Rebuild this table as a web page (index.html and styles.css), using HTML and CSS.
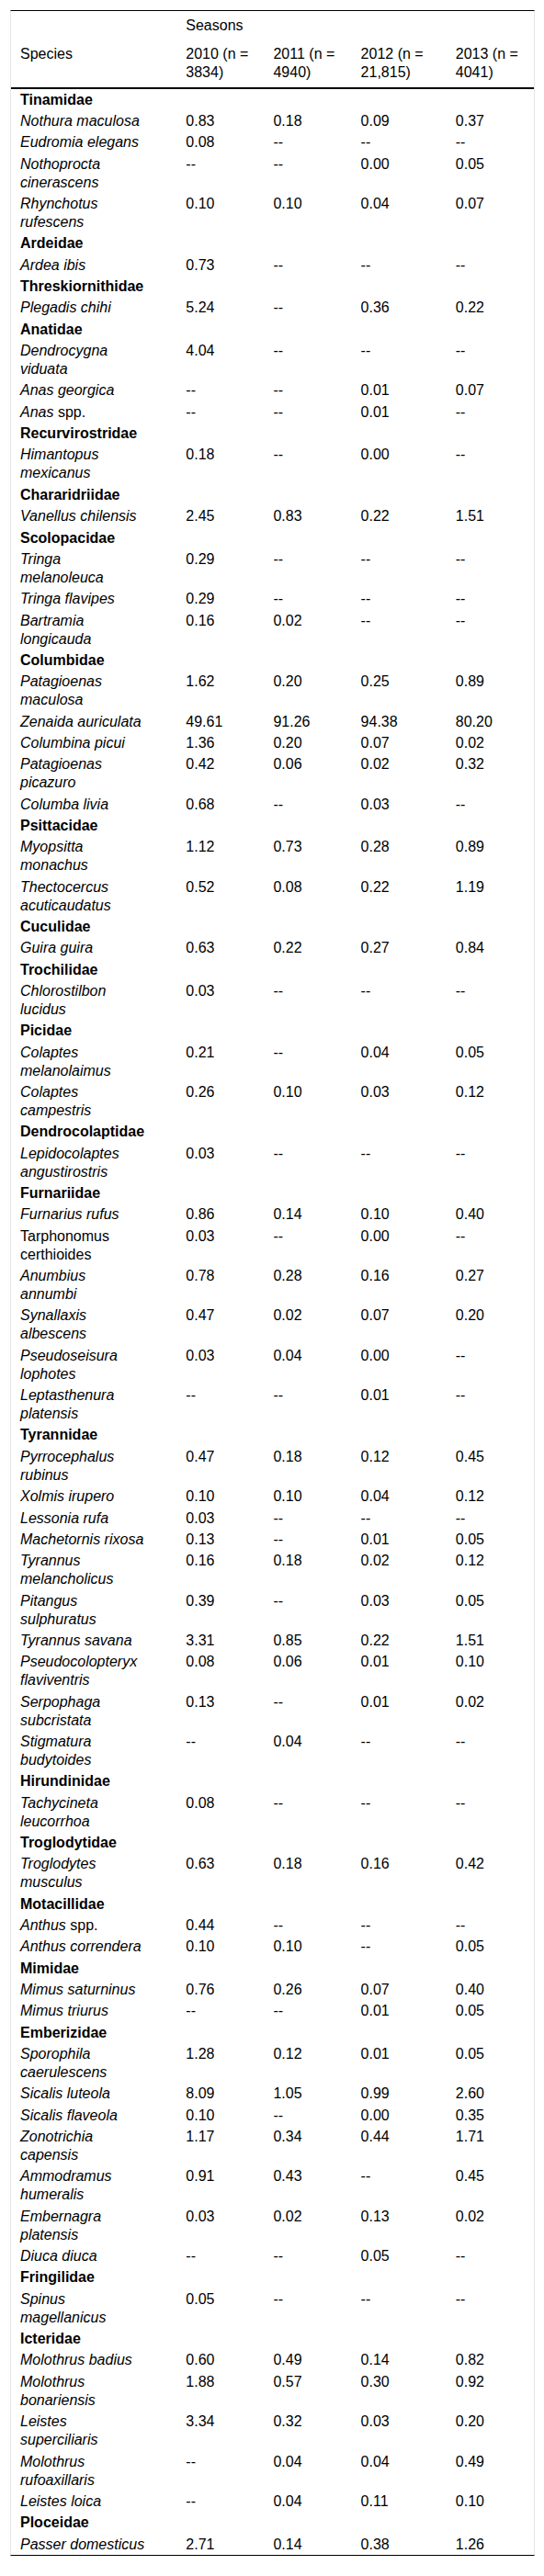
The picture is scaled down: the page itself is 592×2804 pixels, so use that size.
FILE: index.html
```html
<!DOCTYPE html>
<html lang="en">
<head>
    <meta charset="UTF-8">
    <meta name="viewport" content="width=device-width, initial-scale=1.0">
    <title>Species by season</title>
    <link rel="stylesheet" href="styles.css">
</head>
<body>
    <div class="table-wrap">
        <table class="data-table">
            <colgroup>
                <col class="col-species">
                <col class="col-year">
                <col class="col-year">
                <col class="col-year-wide">
                <col class="col-year">
            </colgroup>
            <thead>
                <tr>
                    <th></th>
                    <th colspan="4">Seasons</th>
                </tr>
                <tr class="head-years">
                    <th>Species</th>
                    <th>2010 (n = 3834)</th>
                    <th>2011 (n = 4940)</th>
                    <th>2012 (n = 21,815)</th>
                    <th>2013 (n = 4041)</th>
                </tr>
            </thead>
            <tbody>
                <tr class="family"><td>Tinamidae</td><td></td><td></td><td></td><td></td></tr>
                <tr><td class="sp">Nothura maculosa</td><td>0.83</td><td>0.18</td><td>0.09</td><td>0.37</td></tr>
                <tr><td class="sp">Eudromia elegans</td><td>0.08</td><td>--</td><td>--</td><td>--</td></tr>
                <tr><td class="sp">Nothoprocta cinerascens</td><td>--</td><td>--</td><td>0.00</td><td>0.05</td></tr>
                <tr><td class="sp">Rhynchotus rufescens</td><td>0.10</td><td>0.10</td><td>0.04</td><td>0.07</td></tr>

                <tr class="family"><td>Ardeidae</td><td></td><td></td><td></td><td></td></tr>
                <tr><td class="sp">Ardea ibis</td><td>0.73</td><td>--</td><td>--</td><td>--</td></tr>

                <tr class="family"><td>Threskiornithidae</td><td></td><td></td><td></td><td></td></tr>
                <tr><td class="sp">Plegadis chihi</td><td>5.24</td><td>--</td><td>0.36</td><td>0.22</td></tr>

                <tr class="family"><td>Anatidae</td><td></td><td></td><td></td><td></td></tr>
                <tr><td class="sp">Dendrocygna viduata</td><td>4.04</td><td>--</td><td>--</td><td>--</td></tr>
                <tr><td class="sp">Anas georgica</td><td>--</td><td>--</td><td>0.01</td><td>0.07</td></tr>
                <tr><td class="sp">Anas <span class="plain">spp.</span></td><td>--</td><td>--</td><td>0.01</td><td>--</td></tr>

                <tr class="family"><td>Recurvirostridae</td><td></td><td></td><td></td><td></td></tr>
                <tr><td class="sp">Himantopus mexicanus</td><td>0.18</td><td>--</td><td>0.00</td><td>--</td></tr>

                <tr class="family"><td>Chararidriidae</td><td></td><td></td><td></td><td></td></tr>
                <tr><td class="sp">Vanellus chilensis</td><td>2.45</td><td>0.83</td><td>0.22</td><td>1.51</td></tr>

                <tr class="family"><td>Scolopacidae</td><td></td><td></td><td></td><td></td></tr>
                <tr><td class="sp">Tringa melanoleuca</td><td>0.29</td><td>--</td><td>--</td><td>--</td></tr>
                <tr><td class="sp">Tringa flavipes</td><td>0.29</td><td>--</td><td>--</td><td>--</td></tr>
                <tr><td class="sp">Bartramia longicauda</td><td>0.16</td><td>0.02</td><td>--</td><td>--</td></tr>

                <tr class="family"><td>Columbidae</td><td></td><td></td><td></td><td></td></tr>
                <tr><td class="sp">Patagioenas maculosa</td><td>1.62</td><td>0.20</td><td>0.25</td><td>0.89</td></tr>
                <tr><td class="sp">Zenaida auriculata</td><td>49.61</td><td>91.26</td><td>94.38</td><td>80.20</td></tr>
                <tr><td class="sp">Columbina picui</td><td>1.36</td><td>0.20</td><td>0.07</td><td>0.02</td></tr>
                <tr><td class="sp">Patagioenas picazuro</td><td>0.42</td><td>0.06</td><td>0.02</td><td>0.32</td></tr>
                <tr><td class="sp">Columba livia</td><td>0.68</td><td>--</td><td>0.03</td><td>--</td></tr>

                <tr class="family"><td>Psittacidae</td><td></td><td></td><td></td><td></td></tr>
                <tr><td class="sp">Myopsitta monachus</td><td>1.12</td><td>0.73</td><td>0.28</td><td>0.89</td></tr>
                <tr><td class="sp">Thectocercus acuticaudatus</td><td>0.52</td><td>0.08</td><td>0.22</td><td>1.19</td></tr>

                <tr class="family"><td>Cuculidae</td><td></td><td></td><td></td><td></td></tr>
                <tr><td class="sp">Guira guira</td><td>0.63</td><td>0.22</td><td>0.27</td><td>0.84</td></tr>

                <tr class="family"><td>Trochilidae</td><td></td><td></td><td></td><td></td></tr>
                <tr><td class="sp">Chlorostilbon lucidus</td><td>0.03</td><td>--</td><td>--</td><td>--</td></tr>

                <tr class="family"><td>Picidae</td><td></td><td></td><td></td><td></td></tr>
                <tr><td class="sp">Colaptes melanolaimus</td><td>0.21</td><td>--</td><td>0.04</td><td>0.05</td></tr>
                <tr><td class="sp">Colaptes campestris</td><td>0.26</td><td>0.10</td><td>0.03</td><td>0.12</td></tr>

                <tr class="family"><td>Dendrocolaptidae</td><td></td><td></td><td></td><td></td></tr>
                <tr><td class="sp">Lepidocolaptes angustirostris</td><td>0.03</td><td>--</td><td>--</td><td>--</td></tr>

                <tr class="family"><td>Furnariidae</td><td></td><td></td><td></td><td></td></tr>
                <tr><td class="sp">Furnarius rufus</td><td>0.86</td><td>0.14</td><td>0.10</td><td>0.40</td></tr>
                <tr><td>Tarphonomus certhioides</td><td>0.03</td><td>--</td><td>0.00</td><td>--</td></tr>
                <tr><td class="sp">Anumbius annumbi</td><td>0.78</td><td>0.28</td><td>0.16</td><td>0.27</td></tr>
                <tr><td class="sp">Synallaxis albescens</td><td>0.47</td><td>0.02</td><td>0.07</td><td>0.20</td></tr>
                <tr><td class="sp">Pseudoseisura lophotes</td><td>0.03</td><td>0.04</td><td>0.00</td><td>--</td></tr>
                <tr><td class="sp">Leptasthenura platensis</td><td>--</td><td>--</td><td>0.01</td><td>--</td></tr>

                <tr class="family"><td>Tyrannidae</td><td></td><td></td><td></td><td></td></tr>
                <tr><td class="sp">Pyrrocephalus rubinus</td><td>0.47</td><td>0.18</td><td>0.12</td><td>0.45</td></tr>
                <tr><td class="sp">Xolmis irupero</td><td>0.10</td><td>0.10</td><td>0.04</td><td>0.12</td></tr>
                <tr><td class="sp">Lessonia rufa</td><td>0.03</td><td>--</td><td>--</td><td>--</td></tr>
                <tr><td class="sp">Machetornis rixosa</td><td>0.13</td><td>--</td><td>0.01</td><td>0.05</td></tr>
                <tr><td class="sp">Tyrannus melancholicus</td><td>0.16</td><td>0.18</td><td>0.02</td><td>0.12</td></tr>
                <tr><td class="sp">Pitangus sulphuratus</td><td>0.39</td><td>--</td><td>0.03</td><td>0.05</td></tr>
                <tr><td class="sp">Tyrannus savana</td><td>3.31</td><td>0.85</td><td>0.22</td><td>1.51</td></tr>
                <tr><td class="sp">Pseudocolopteryx flaviventris</td><td>0.08</td><td>0.06</td><td>0.01</td><td>0.10</td></tr>
                <tr><td class="sp">Serpophaga subcristata</td><td>0.13</td><td>--</td><td>0.01</td><td>0.02</td></tr>
                <tr><td class="sp">Stigmatura budytoides</td><td>--</td><td>0.04</td><td>--</td><td>--</td></tr>

                <tr class="family"><td>Hirundinidae</td><td></td><td></td><td></td><td></td></tr>
                <tr><td class="sp">Tachycineta leucorrhoa</td><td>0.08</td><td>--</td><td>--</td><td>--</td></tr>

                <tr class="family"><td>Troglodytidae</td><td></td><td></td><td></td><td></td></tr>
                <tr><td class="sp">Troglodytes musculus</td><td>0.63</td><td>0.18</td><td>0.16</td><td>0.42</td></tr>

                <tr class="family"><td>Motacillidae</td><td></td><td></td><td></td><td></td></tr>
                <tr><td class="sp">Anthus <span class="plain">spp.</span></td><td>0.44</td><td>--</td><td>--</td><td>--</td></tr>
                <tr><td class="sp">Anthus correndera</td><td>0.10</td><td>0.10</td><td>--</td><td>0.05</td></tr>

                <tr class="family"><td>Mimidae</td><td></td><td></td><td></td><td></td></tr>
                <tr><td class="sp">Mimus saturninus</td><td>0.76</td><td>0.26</td><td>0.07</td><td>0.40</td></tr>
                <tr><td class="sp">Mimus triurus</td><td>--</td><td>--</td><td>0.01</td><td>0.05</td></tr>

                <tr class="family"><td>Emberizidae</td><td></td><td></td><td></td><td></td></tr>
                <tr><td class="sp">Sporophila caerulescens</td><td>1.28</td><td>0.12</td><td>0.01</td><td>0.05</td></tr>
                <tr><td class="sp">Sicalis luteola</td><td>8.09</td><td>1.05</td><td>0.99</td><td>2.60</td></tr>
                <tr><td class="sp">Sicalis flaveola</td><td>0.10</td><td>--</td><td>0.00</td><td>0.35</td></tr>
                <tr><td class="sp">Zonotrichia capensis</td><td>1.17</td><td>0.34</td><td>0.44</td><td>1.71</td></tr>
                <tr><td class="sp">Ammodramus humeralis</td><td>0.91</td><td>0.43</td><td>--</td><td>0.45</td></tr>
                <tr><td class="sp">Embernagra platensis</td><td>0.03</td><td>0.02</td><td>0.13</td><td>0.02</td></tr>
                <tr><td class="sp">Diuca diuca</td><td>--</td><td>--</td><td>0.05</td><td>--</td></tr>

                <tr class="family"><td>Fringilidae</td><td></td><td></td><td></td><td></td></tr>
                <tr><td class="sp">Spinus magellanicus</td><td>0.05</td><td>--</td><td>--</td><td>--</td></tr>

                <tr class="family"><td>Icteridae</td><td></td><td></td><td></td><td></td></tr>
                <tr><td class="sp">Molothrus badius</td><td>0.60</td><td>0.49</td><td>0.14</td><td>0.82</td></tr>
                <tr><td class="sp">Molothrus bonariensis</td><td>1.88</td><td>0.57</td><td>0.30</td><td>0.92</td></tr>
                <tr><td class="sp">Leistes superciliaris</td><td>3.34</td><td>0.32</td><td>0.03</td><td>0.20</td></tr>
                <tr><td class="sp">Molothrus rufoaxillaris</td><td>--</td><td>0.04</td><td>0.04</td><td>0.49</td></tr>
                <tr><td class="sp">Leistes loica</td><td>--</td><td>0.04</td><td>0.11</td><td>0.10</td></tr>

                <tr class="family"><td>Ploceidae</td><td></td><td></td><td></td><td></td></tr>
                <tr><td class="sp">Passer domesticus</td><td>2.71</td><td>0.14</td><td>0.38</td><td>1.26</td></tr>
            </tbody>
        </table>
    </div>
</body>
</html>
```

FILE: styles.css
```css
:root {
    --text-color: #000000;
    --rule-color: #000000;
    --side-color: #e6e6e6;
}

* {
    margin: 0;
    padding: 0;
    box-sizing: border-box;
}

body {
    font-family: 'Liberation Sans', Arial, Helvetica, sans-serif;
    font-size: 16px;
    line-height: 20px;
    color: var(--text-color);
    background-color: #ffffff;
}

.table-wrap {
    margin: 11px 10px 0 11px;
    border-top: 1px solid var(--rule-color);
    border-bottom: 1px solid var(--rule-color);
    border-left: 1px solid var(--side-color);
    border-right: 1px solid var(--side-color);
}

.data-table {
    width: 569px;
    border-collapse: collapse;
    table-layout: fixed;
}

.col-species {
    width: 180px;
}

.col-year {
    width: 95px;
}

.col-year-wide {
    width: 103px;
}

.data-table th {
    font-weight: normal;
    text-align: left;
    vertical-align: top;
    padding: 6px 10px 5px;
}

.head-years th {
    padding-bottom: 6px;
    border-bottom: 2px solid var(--rule-color);
}

.data-table td {
    text-align: left;
    vertical-align: top;
    padding: 1.68px 10px;
}

/* species names wrap a little before the column edge */
.data-table td:first-child,
.data-table th:first-child {
    padding-right: 34px;
}

.sp {
    font-style: italic;
}

.sp .plain {
    font-style: normal;
}

.family td {
    font-weight: bold;
}
```
